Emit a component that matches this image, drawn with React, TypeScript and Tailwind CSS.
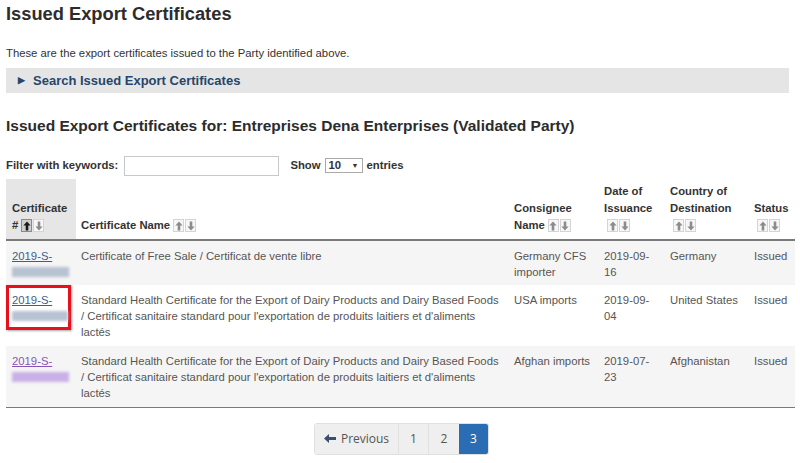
import React from "react";

type Row = {
  id: string;
  name: string;
  consignee: string;
  date: string;
  country: string;
  status: string;
  visited?: boolean;
  flagged?: boolean;
};

const rows: Row[] = [
  {
    id: "2019-S-",
    name: "Certificate of Free Sale / Certificat de vente libre",
    consignee: "Germany CFS importer",
    date: "2019-09-16",
    country: "Germany",
    status: "Issued",
  },
  {
    id: "2019-S-",
    name: "Standard Health Certificate for the Export of Dairy Products and Dairy Based Foods / Certificat sanitaire standard pour l'exportation de produits laitiers et d'aliments lactés",
    consignee: "USA imports",
    date: "2019-09-04",
    country: "United States",
    status: "Issued",
    flagged: true,
  },
  {
    id: "2019-S-",
    name: "Standard Health Certificate for the Export of Dairy Products and Dairy Based Foods / Certificat sanitaire standard pour l'exportation de produits laitiers et d'aliments lactés",
    consignee: "Afghan imports",
    date: "2019-07-23",
    country: "Afghanistan",
    status: "Issued",
    visited: true,
  },
];

function Arrow({ dir, active }: { dir: "up" | "down"; active?: boolean }) {
  return (
    <span
      className={`inline-flex items-center justify-center w-[11px] h-[13px] border ${
        active ? "bg-[#cfcfcf] border-[#8a8a8a]" : "bg-[#f7f7f7] border-[#d4d4d4]"
      }`}
    >
      <svg width="8" height="10" viewBox="0 0 8 10">
        {dir === "up" ? (
          <path d="M4 0.5 L7.6 4.5 L5.3 4.5 L5.3 9.5 L2.7 9.5 L2.7 4.5 L0.4 4.5 Z" fill={active ? "#1a1a1a" : "#8c8c8c"} />
        ) : (
          <path d="M4 9.5 L7.6 5.5 L5.3 5.5 L5.3 0.5 L2.7 0.5 L2.7 5.5 L0.4 5.5 Z" fill="#8c8c8c" />
        )}
      </svg>
    </span>
  );
}

function Sort({ active }: { active?: boolean }) {
  return (
    <span className="inline-flex align-middle gap-px ml-[3px]">
      <Arrow dir="up" active={active} />
      <Arrow dir="down" />
    </span>
  );
}

function CertId({ row }: { row: Row }) {
  const color = row.visited ? "text-[#8a55b8]" : "text-[#3d5f8c]";
  const blur = row.visited ? "bg-[#c9b0e6]" : "bg-[#b7c2d2]";
  const inner = (
    <div>
      <a className={`${color} underline`}>{row.id}</a>
      <div className="h-[16px] flex items-center">
        <div className={`w-[57px] h-[10px] ${blur} blur-[1.5px]`} />
      </div>
    </div>
  );
  if (row.flagged) {
    return (
      <div className="-ml-[6px] -mt-[7px] pl-[3px] pt-[4px] pb-[3px] w-[65px] border-[3px] border-[#e8101a] shadow-[1px_1px_2px_rgba(0,0,0,0.35)]">
        {inner}
      </div>
    );
  }
  return inner;
}

export default function App() {
  return (
    <div className="w-[800px] h-[463px] bg-white text-[#333] px-[6px] overflow-hidden" style={{ fontFamily: '"Liberation Sans", Arial, sans-serif' }}>
      <h1 className="text-[18.3px] font-bold leading-none pt-[5px] text-[#2c2c2c]">Issued Export Certificates</h1>
      <p className="text-[11.3px] mt-[23px] leading-[14px]">These are the export certificates issued to the Party identified above.</p>
      <div className="mt-[8px] h-[25px] mr-[5px] bg-[#e5e5e5] flex items-center pl-[12px] text-[13px] font-bold text-[#27466a]">
        <span className="text-[9px] mr-[8px]">▶</span>
        Search Issued Export Certificates
      </div>
      <h2 className="text-[15.5px] font-bold mt-[25px] leading-none text-[#2c2c2c]">
        Issued Export Certificates for: Entreprises Dena Enterprises (Validated Party)
      </h2>
      <div className="mt-[22px] flex items-center text-[11.3px] font-bold">
        <span>Filter with keywords:</span>
        <input className="ml-[6px] w-[155px] h-[20px] border border-[#c8c8c8] bg-white" />
        <span className="ml-[11px]">Show</span>
        <span className="ml-[4px] w-[38px] h-[15px] border border-[#a9a9a9] flex items-center justify-between px-[3px] font-bold">
          10<span className="text-[7px]">▼</span>
        </span>
        <span className="ml-[4px]">entries</span>
      </div>
      <table className="mt-[3px] w-[789px] table-fixed border-collapse text-[11.3px] leading-[16px]">
        <colgroup>
          <col className="w-[70px]" />
          <col className="w-[433px]" />
          <col className="w-[90px]" />
          <col className="w-[66px]" />
          <col className="w-[84px]" />
          <col className="w-[46px]" />
        </colgroup>
        <thead>
          <tr className="border-b-2 border-[#7a7a7a] font-bold text-left align-bottom leading-[17px]">
            <th className="bg-[#e6e6e6] h-[61px] pl-[6px] pb-[5px]">
              Certificate
              <br />#<Sort active />
            </th>
            <th className="pl-[5px] pb-[5px]">
              Certificate Name<Sort />
            </th>
            <th className="pl-[5px] pb-[5px]">
              Consignee
              <br />Name<Sort />
            </th>
            <th className="pl-[5px] pb-[5px]">
              Date of
              <br />Issuance
              <br />
              <Sort />
            </th>
            <th className="pl-[5px] pb-[5px]">
              Country of
              <br />Destination
              <br />
              <Sort />
            </th>
            <th className="pl-[5px] pb-[5px]">
              Status
              <br />
              <Sort />
            </th>
          </tr>
        </thead>
        <tbody className="text-[#555]">
          {rows.map((r, i) => (
            <tr key={i} className={`align-top ${i % 2 === 0 ? "bg-[#f5f5f5]" : "bg-white"} ${i === rows.length - 1 ? "border-b border-[#7a7a7a]" : ""}`}>
              <td className="pl-[6px] pt-[7px] pb-[5px]">
                <CertId row={r} />
              </td>
              <td className="pl-[5px] pr-[8px] pt-[7px] pb-[6px]">{r.name}</td>
              <td className="pl-[5px] pt-[7px]">{r.consignee}</td>
              <td className="pl-[5px] pt-[7px] pr-[8px]">{r.date}</td>
              <td className="pl-[5px] pt-[7px]">{r.country}</td>
              <td className="pl-[5px] pt-[7px]">{r.status}</td>
            </tr>
          ))}
        </tbody>
      </table>
      <div className="mt-[15px] flex justify-center pl-[3px]">
        <div className="flex h-[32px] text-[12px] text-[#555] border border-[#e0e0e0] rounded-[3px] overflow-hidden" style={{ fontFamily: '"Open Sans", sans-serif' }}>
          <span className="w-[84px] bg-[#efefef] flex items-center justify-center gap-[5px] border-r border-[#e0e0e0]">
            <svg width="12" height="9" viewBox="0 0 12 9">
              <path d="M0 4.5 L5 0 L5 3 L12 3 L12 6 L5 6 L5 9 Z" fill="#3b4f6b" />
            </svg>
            Previous
          </span>
          <span className="w-[30px] bg-[#efefef] flex items-center justify-center border-r border-[#e0e0e0]">1</span>
          <span className="w-[30px] bg-[#efefef] flex items-center justify-center">2</span>
          <span className="w-[29px] bg-[#2b6db5] text-white flex items-center justify-center">3</span>
        </div>
      </div>
    </div>
  );
}
